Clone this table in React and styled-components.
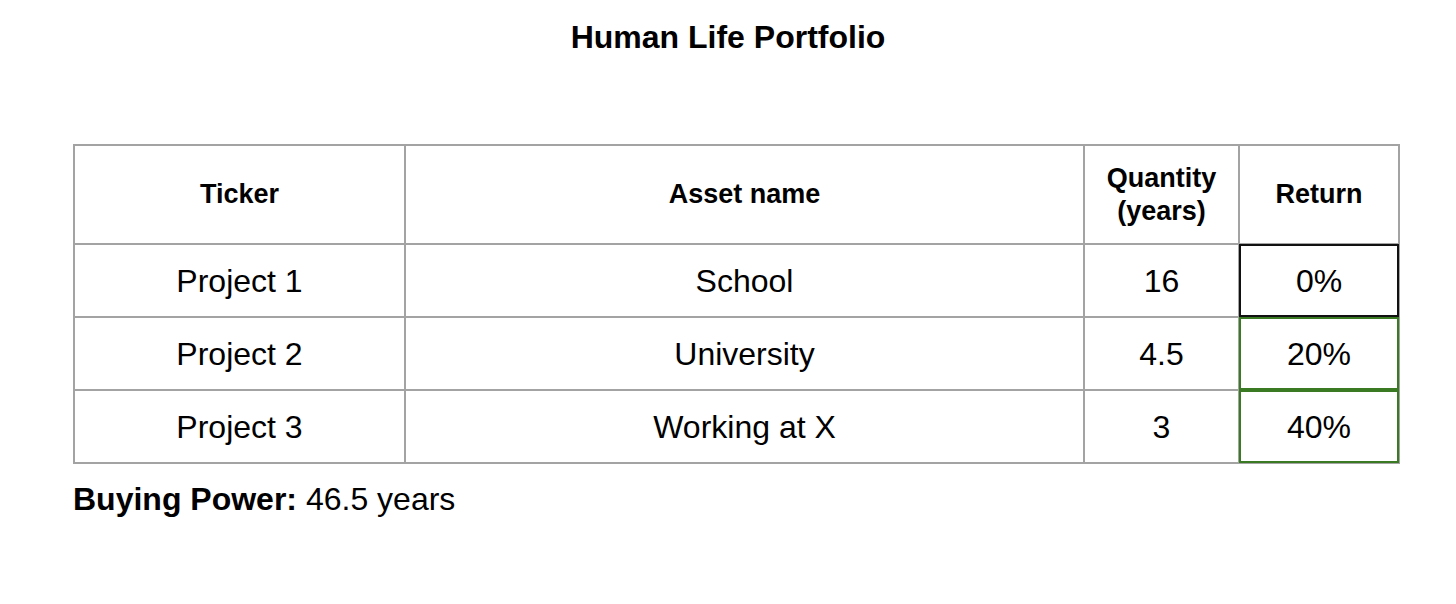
import React from "react";
import styled, { createGlobalStyle } from "styled-components";

const Global = createGlobalStyle`
  html, body { margin: 0; padding: 0; background: #ffffff; }
  body { font-family: "Liberation Sans", Arial, Helvetica, sans-serif; color: #000; }
`;

const Page = styled.div`
  width: 1456px;
  height: 604px;
  box-sizing: border-box;
  padding: 19px 0 0 73px;
  display: flex;
  flex-direction: column;
  align-items: flex-start;
`;

const Title = styled.h1`
  margin: 0 0 88px -73px;
  width: 1456px;
  text-align: center;
  font-size: 32px;
  font-weight: 700;
  line-height: 37px;
  color: #000;
`;

const Table = styled.table`
  border-collapse: collapse;
  width: 1325px;
  table-layout: fixed;
`;

const HeadCell = styled.th`
  border: 2px solid #a3a3a3;
  height: 97px;
  padding: 0 8px;
  font-size: 27px;
  font-weight: 700;
  line-height: 33px;
  text-align: center;
  vertical-align: middle;
`;

const Cell = styled.td`
  border: 2px solid #a3a3a3;
  height: 73px;
  padding: 2px 8px 0;
  box-sizing: border-box;
  font-size: 32px;
  font-weight: 400;
  text-align: center;
  vertical-align: middle;
  position: relative;
  &::after {
    content: "";
    display: ${(p) => (p.$accent ? "block" : "none")};
    position: absolute;
    inset: -1px;
    border: 2px solid ${(p) => p.$accent || "transparent"};
    pointer-events: none;
  }
`;

const Summary = styled.p`
  margin: 17px 0 0 0;
  font-size: 32px;
  line-height: 37px;
  & strong { font-weight: 700; }
`;

const rows = [
  { ticker: "Project 1", name: "School", qty: "16", ret: "0%", accent: "#111111" },
  { ticker: "Project 2", name: "University", qty: "4.5", ret: "20%", accent: "#3a7a22" },
  { ticker: "Project 3", name: "Working at X", qty: "3", ret: "40%", accent: "#3a7a22" },
];

export default function App() {
  return (
    <>
      <Global />
      <Page>
        <Title>Human Life Portfolio</Title>
        <Table>
          <colgroup>
            <col style={{ width: 331 }} />
            <col style={{ width: 679 }} />
            <col style={{ width: 155 }} />
            <col style={{ width: 160 }} />
          </colgroup>
          <thead>
            <tr>
              <HeadCell>Ticker</HeadCell>
              <HeadCell>Asset name</HeadCell>
              <HeadCell>
                Quantity
                <br />
                (years)
              </HeadCell>
              <HeadCell>Return</HeadCell>
            </tr>
          </thead>
          <tbody>
            {rows.map((r) => (
              <tr key={r.ticker}>
                <Cell>{r.ticker}</Cell>
                <Cell>{r.name}</Cell>
                <Cell>{r.qty}</Cell>
                <Cell $accent={r.accent}>{r.ret}</Cell>
              </tr>
            ))}
          </tbody>
        </Table>
        <Summary>
          <strong>Buying Power:</strong> 46.5 years
        </Summary>
      </Page>
    </>
  );
}
